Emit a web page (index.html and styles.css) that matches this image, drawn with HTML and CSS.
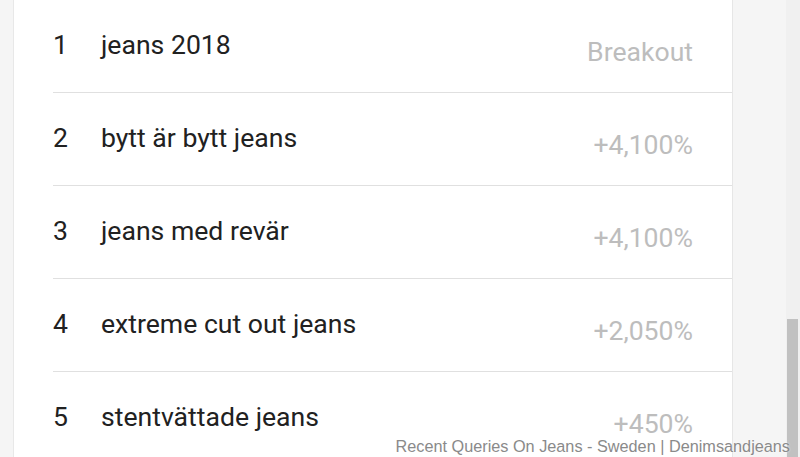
FILE: index.html
```html
<!DOCTYPE html>
<html>
<head>
<meta charset="utf-8">
<link rel="stylesheet" href="styles.css">
</head>
<body>
<div class="page">
  <main class="content">
    <section class="card">
      <ul class="list">
        <li class="row"><span class="rank">1</span><span class="query">jeans 2018</span><span class="value">Breakout</span></li>
        <li class="row"><span class="rank">2</span><span class="query">bytt är bytt jeans</span><span class="value">+4,100%</span></li>
        <li class="row"><span class="rank">3</span><span class="query">jeans med revär</span><span class="value">+4,100%</span></li>
        <li class="row"><span class="rank">4</span><span class="query">extreme cut out jeans</span><span class="value">+2,050%</span></li>
        <li class="row"><span class="rank">5</span><span class="query">stentvättade jeans</span><span class="value">+450%</span></li>
      </ul>
    </section>
  </main>
  <div class="scrollbar"><div class="thumb"></div></div>
  <div class="watermark">Recent Queries On Jeans - Sweden | Denimsandjeans</div>
</div>
</body>
</html>
```
FILE: styles.css
```css
html, body {
  margin: 0;
  padding: 0;
  width: 800px;
  height: 457px;
  overflow: hidden;
  background: #f5f5f5;
}
.page {
  position: relative;
  display: flex;
  width: 800px;
  height: 457px;
  overflow: hidden;
}
.content {
  flex: 1;
  padding-left: 13px;
}
.card {
  width: 718px;
  height: 470px;
  background: #fff;
  border-left: 1px solid #e8e8e8;
  border-right: 1px solid #e6e6e6;
}
.list {
  list-style: none;
  margin: 0;
  padding: 0 39px 0 39px;
  font-family: Roboto, "Noto Sans", sans-serif;
  font-size: 26.6px;
  line-height: 32px;
}
.row {
  display: flex;
  align-items: flex-start;
  height: 92px;
  border-bottom: 1px solid #e0e0e0;
  margin-right: -39px;
  padding-right: 39px;
}
.rank {
  width: 48px;
  padding-top: 29px;
  color: #212121;
}
.query {
  flex: 1;
  padding-top: 29px;
  color: #212121;
}
.value {
  padding-top: 36px;
  color: #bdbdbd;
}
.scrollbar {
  width: 14px;
  background: #f0f0f0;
  display: flex;
  flex-direction: column;
  justify-content: flex-end;
}
.thumb {
  height: 138px;
  margin: 0 2px 0 1px;
  background: #c1c1c1;
}
.watermark {
  position: absolute;
  right: 10px;
  bottom: 1px;
  font-family: Arial, "Liberation Sans", sans-serif;
  font-size: 16.25px;
  color: #8a8a8a;
  text-shadow: 0 0 2px #fff;
}
```
